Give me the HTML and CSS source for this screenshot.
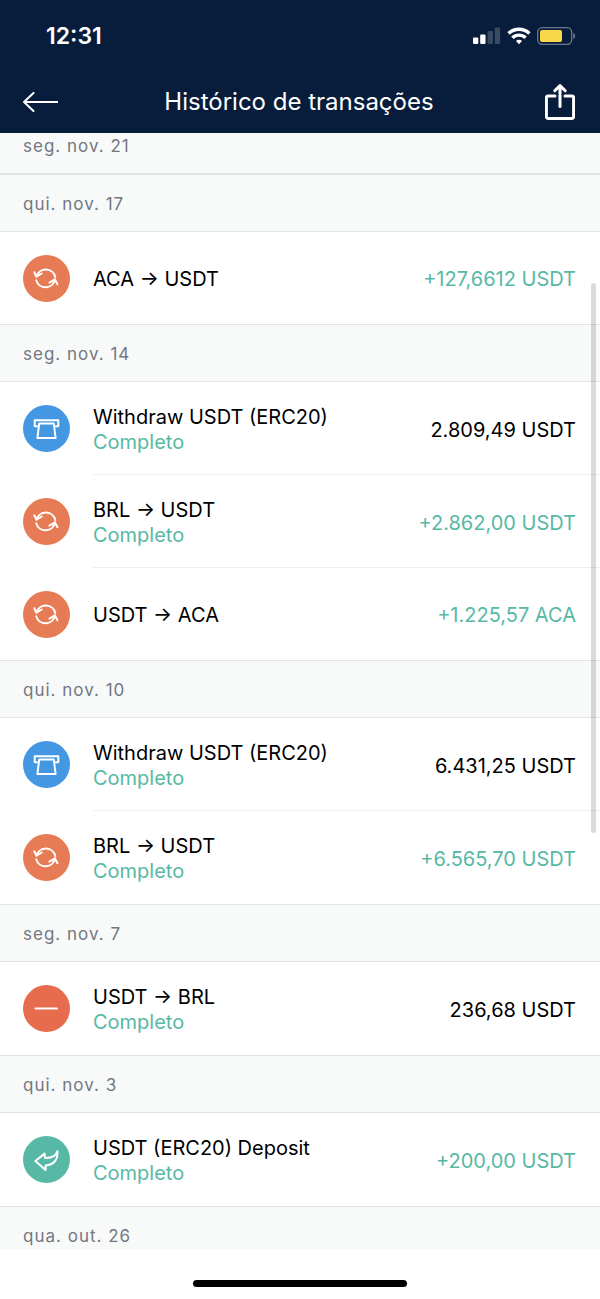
FILE: index.html
```html
<!DOCTYPE html>
<html lang="pt-BR">

<head>
    <meta charset="UTF-8">
    <meta name="viewport" content="width=device-width, initial-scale=1.0">
    <title>Histórico de transações</title>
    <link rel="stylesheet" href="styles.css">
</head>

<body>
    <!-- Shared transaction icons -->
    <svg class="sprite" aria-hidden="true">
        <symbol id="icon-convert" viewBox="0 0 47 47">
            <path d="M13.6 21.400a9.700 9.700 0 0 1 18.700.600M32 24.600a9.700 9.700 0 0 1-18.800.600" />
            <path d="M11.300 17.200l2.200 4.500 5.300-3.200M26.400 27.600l5.500-3.200 2.600 4.800" />
        </symbol>
        <symbol id="icon-withdraw" viewBox="0 0 47 47">
            <path d="M14 21.200h-2.300v-6h23.600v6H33M16.200 18.600h14.600l1.800 14.400H14.400z" />
        </symbol>
        <symbol id="icon-minus" viewBox="0 0 47 47">
            <path d="M12.500 23.500h21.500" />
        </symbol>
        <symbol id="icon-deposit" viewBox="0 0 47 47">
            <path d="M12.400 25l9.200-7.400.400 4.400c6 .200 10.600-1.400 12.400-6.600.600 7.400-2.400 13.400-11.800 14v4.600z" />
        </symbol>
    </svg>

    <div class="app">
        <header class="top">
            <div class="status-bar">
                <span class="time">12:31</span>
                <div class="status-icons">
                    <svg width="28" height="18" viewBox="0 0 28 18" fill="#fff">
                        <rect x="0" y="10.500" width="5.300" height="6.500" rx="1" />
                        <rect x="7.200" y="7.500" width="5.300" height="9.500" rx="1" />
                        <rect x="14.600" y="4" width="5.300" height="13" rx="1" opacity=".2" />
                        <rect x="21.800" y="0.500" width="5.300" height="16.500" rx="1" opacity=".2" />
                    </svg>
                    <svg width="24" height="18" viewBox="0 0 24 18" fill="none" stroke="#fff" stroke-width="3.400">
                        <path d="M1.600 6.400a15 15 0 0 1 20.800 0" />
                        <path d="M5.400 10.800a9.400 9.400 0 0 1 13.200 0" />
                        <path d="M12 17.200l-3-3.200a4.200 4.200 0 0 1 6 0z" fill="#fff" stroke="none" />
                    </svg>
                    <svg width="39" height="18" viewBox="0 0 39 18">
                        <rect x=".7" y=".7" width="34" height="16.600" rx="4.500" fill="none" stroke="#6b778a" stroke-width="1.300" />
                        <rect x="3" y="3" width="22" height="12" rx="2" fill="#f8d74a" />
                        <path d="M36.300 5.800c2.400 1 2.400 5.400 0 6.400z" fill="#6b778a" />
                    </svg>
                </div>
            </div>
            <nav class="nav-bar">
                <button class="nav-button" type="button" aria-label="Voltar">
                    <svg width="35" height="20" viewBox="0 0 35 20">
                        <path d="M10.500 1L1 10l9.500 9M1 10h33.500" />
                    </svg>
                </button>
                <h1>Histórico de transações</h1>
                <button class="nav-button share" type="button" aria-label="Compartilhar">
                    <svg width="30" height="36" viewBox="0 0 30 36">
                        <path d="M10 12H3a1.600 1.600 0 0 0-1.600 1.600v19.200A1.600 1.600 0 0 0 3 34.400h24a1.600 1.600 0 0 0 1.600-1.600V13.600A1.600 1.600 0 0 0 27 12h-7M15 22.500V2M9.800 6.800L15 1.600l5.200 5.200" />
                    </svg>
                </button>
            </nav>
        </header>

        <main class="history">
            <div class="list">
                <h2 class="date">seg. nov. 21</h2>

                <h2 class="date">qui. nov. 17</h2>
                <ul class="group">
                    <li class="row">
                        <svg class="icon convert"><use href="#icon-convert" /></svg>
                        <div class="body">
                            <div class="info">
                                <p class="name">ACA → USDT</p>
                            </div>
                            <p class="amount positive">+127,6612 USDT</p>
                        </div>
                    </li>
                </ul>

                <h2 class="date">seg. nov. 14</h2>
                <ul class="group">
                    <li class="row">
                        <svg class="icon withdraw"><use href="#icon-withdraw" /></svg>
                        <div class="body">
                            <div class="info">
                                <p class="name">Withdraw USDT (ERC20)</p>
                                <p class="state">Completo</p>
                            </div>
                            <p class="amount">2.809,49 USDT</p>
                        </div>
                    </li>
                    <li class="row">
                        <svg class="icon convert"><use href="#icon-convert" /></svg>
                        <div class="body">
                            <div class="info">
                                <p class="name">BRL → USDT</p>
                                <p class="state">Completo</p>
                            </div>
                            <p class="amount positive">+2.862,00 USDT</p>
                        </div>
                    </li>
                    <li class="row">
                        <svg class="icon convert"><use href="#icon-convert" /></svg>
                        <div class="body">
                            <div class="info">
                                <p class="name">USDT → ACA</p>
                            </div>
                            <p class="amount positive">+1.225,57 ACA</p>
                        </div>
                    </li>
                </ul>

                <h2 class="date">qui. nov. 10</h2>
                <ul class="group">
                    <li class="row">
                        <svg class="icon withdraw"><use href="#icon-withdraw" /></svg>
                        <div class="body">
                            <div class="info">
                                <p class="name">Withdraw USDT (ERC20)</p>
                                <p class="state">Completo</p>
                            </div>
                            <p class="amount">6.431,25 USDT</p>
                        </div>
                    </li>
                    <li class="row">
                        <svg class="icon convert"><use href="#icon-convert" /></svg>
                        <div class="body">
                            <div class="info">
                                <p class="name">BRL → USDT</p>
                                <p class="state">Completo</p>
                            </div>
                            <p class="amount positive">+6.565,70 USDT</p>
                        </div>
                    </li>
                </ul>

                <h2 class="date">seg. nov. 7</h2>
                <ul class="group">
                    <li class="row">
                        <svg class="icon minus"><use href="#icon-minus" /></svg>
                        <div class="body">
                            <div class="info">
                                <p class="name">USDT → BRL</p>
                                <p class="state">Completo</p>
                            </div>
                            <p class="amount">236,68 USDT</p>
                        </div>
                    </li>
                </ul>

                <h2 class="date">qui. nov. 3</h2>
                <ul class="group">
                    <li class="row">
                        <svg class="icon deposit"><use href="#icon-deposit" /></svg>
                        <div class="body">
                            <div class="info">
                                <p class="name">USDT (ERC20) Deposit</p>
                                <p class="state">Completo</p>
                            </div>
                            <p class="amount positive">+200,00 USDT</p>
                        </div>
                    </li>
                </ul>

                <h2 class="date">qua. out. 26</h2>
            </div>
            <div class="scroll-thumb"></div>
        </main>

        <footer class="home-area">
            <div class="home-indicator"></div>
        </footer>
    </div>
</body>

</html>
```

FILE: styles.css
```css
* {
    box-sizing: border-box;
}

body {
    margin: 0;
    font-family: Inter, "Liberation Sans", sans-serif;
    background-color: #fff;
    color: #000;
}

h1,
h2,
p,
ul {
    margin: 0;
    padding: 0;
    font-weight: 400;
}

ul {
    list-style: none;
}

.sprite {
    display: none;
}

.app {
    display: flex;
    flex-direction: column;
    height: 100vh;
}

/* Header */
.top {
    background-color: #081d3c;
    color: #fff;
}

.status-bar {
    display: flex;
    justify-content: space-between;
    align-items: center;
    height: 72px;
    padding: 0 24px 0 46px;
}

.time {
    font-size: 23px;
    font-weight: 600;
}

.status-icons {
    display: flex;
    align-items: center;
    gap: 6px;
}

.nav-bar {
    display: grid;
    grid-template-columns: 48px 1fr 48px;
    align-items: center;
    height: 61px;
    padding: 0 25px 2px 23px;
}

.nav-bar h1 {
    font-size: 24px;
    text-align: center;
}

.nav-button {
    display: flex;
    padding: 0;
    border: 0;
    background: none;
    cursor: pointer;
}

.nav-button svg {
    fill: none;
    stroke: #fff;
    stroke-width: 2;
    stroke-linecap: round;
    stroke-linejoin: round;
}

.share {
    justify-content: flex-end;
}

.nav-button.share svg {
    stroke-width: 3;
}

/* Transaction list */
.history {
    position: relative;
    flex: 1;
    min-height: 0;
    overflow: hidden;
}

/* list is scrolled part way past the first date */
.list {
    margin-top: -17px;
}

.date {
    height: 58px;
    padding: 0 23px;
    border-top: 1px solid #e2e4e4;
    border-bottom: 1px solid #e2e4e4;
    background-color: #f8faf9;
    color: #727782;
    font-size: 17px;
    line-height: 58px;
    letter-spacing: 1px;
}

.row {
    display: flex;
    align-items: center;
    gap: 23px;
    padding-left: 23px;
}

.icon {
    flex: none;
    width: 47px;
    height: 47px;
    border-radius: 50%;
    fill: none;
    stroke: #fff;
    stroke-width: 2;
    stroke-linecap: round;
    stroke-linejoin: round;
}

.convert {
    background-color: #e67b55;
}

.withdraw {
    background-color: #4497e2;
}

.minus {
    background-color: #e76c4d;
}

.deposit {
    background-color: #57b9a5;
}

.body {
    display: flex;
    flex: 1;
    justify-content: space-between;
    align-items: center;
    min-height: 92px;
    padding: 23px 24px 19px 0;
    border-bottom: 1px solid #eeefef;
}

.row:last-child .body {
    border-bottom-color: transparent;
}

.name,
.state,
.amount {
    font-size: 20px;
    line-height: 25px;
}

.state,
.positive {
    color: #57b9a5;
}

.scroll-thumb {
    position: absolute;
    top: 150px;
    right: 4px;
    width: 5px;
    height: 550px;
    border-radius: 3px;
    background-color: rgba(0, 0, 0, 0.14);
}

/* Home indicator */
.home-area {
    display: flex;
    justify-content: center;
    align-items: flex-end;
    height: 50px;
    padding-bottom: 12px;
}

.home-indicator {
    width: 214px;
    height: 7px;
    border-radius: 4px;
    background-color: #000;
}
```
